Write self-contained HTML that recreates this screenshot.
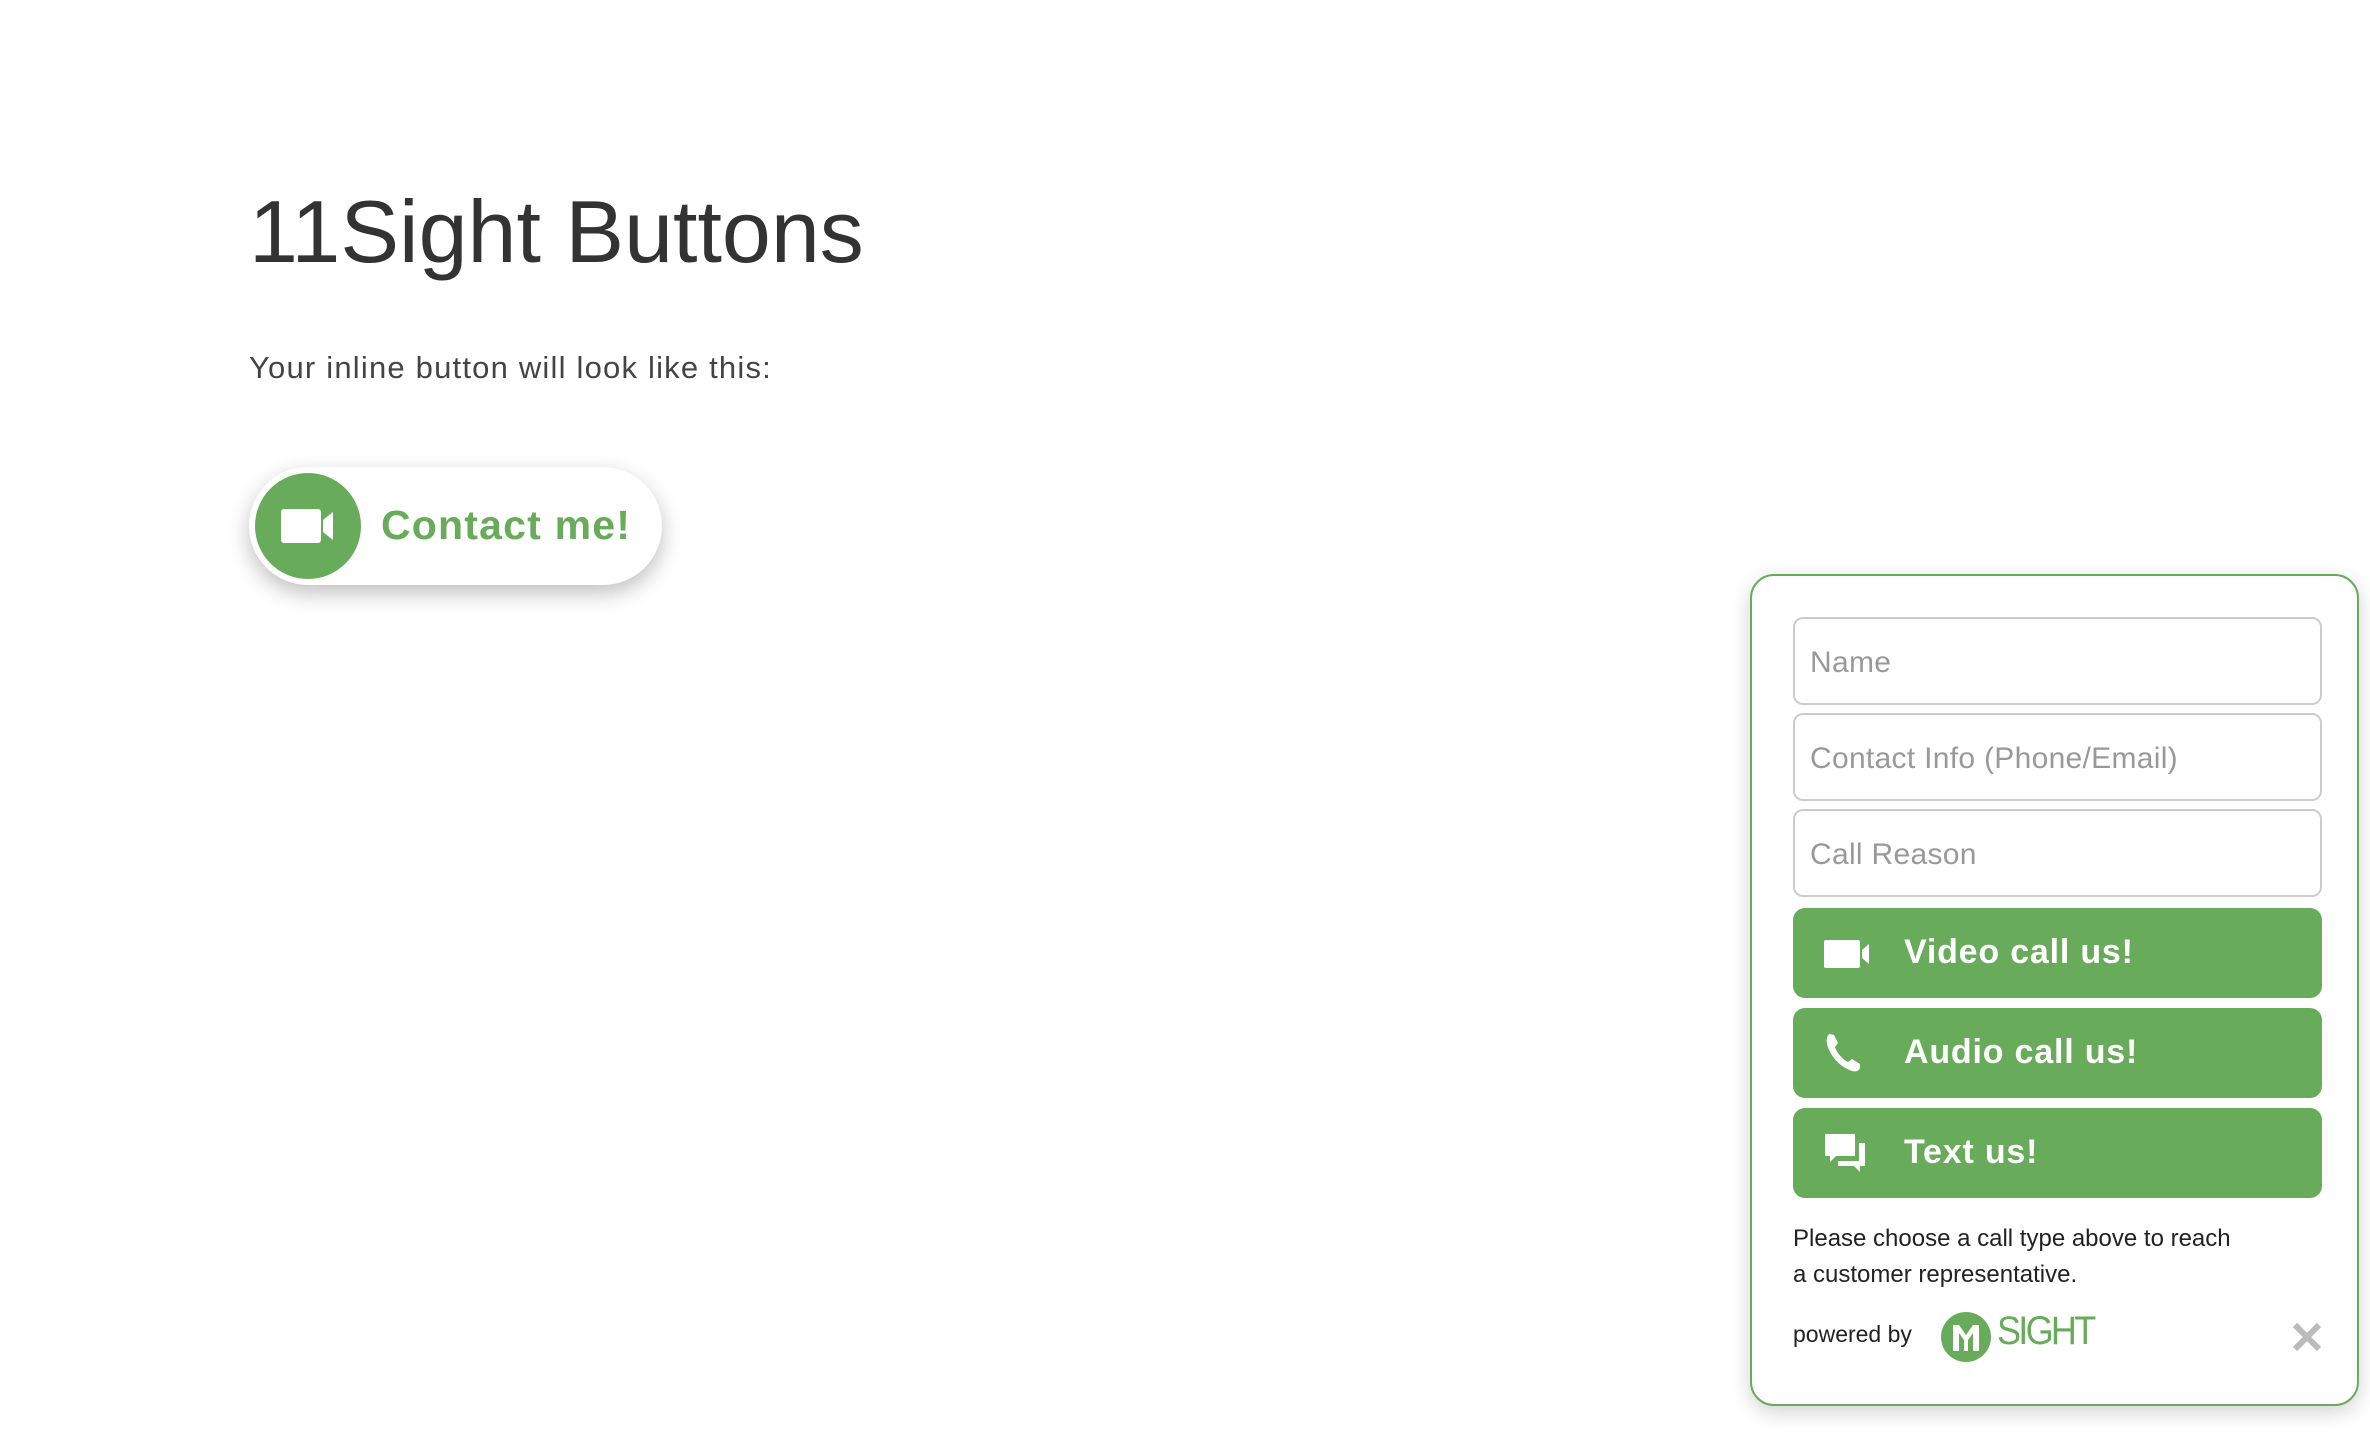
<!DOCTYPE html>
<html><head><meta charset="utf-8"><style>
*{margin:0;padding:0;box-sizing:border-box}
body{width:2370px;height:1450px;background:#fff;position:relative;overflow:hidden;font-family:"Liberation Sans",sans-serif}
.a{position:absolute}
h1{position:absolute;left:249px;top:188px;font-size:88px;font-weight:400;color:#333;letter-spacing:0;line-height:1}
.sub{left:249px;top:350px;font-size:31px;color:#444;letter-spacing:1.2px}
.pill{left:249px;top:467px;width:413px;height:118px;border-radius:59px;background:#fff;box-shadow:0 8px 22px rgba(0,0,0,.25)}
.circ{left:6px;top:6px;width:106px;height:106px;border-radius:50%;background:#68ab5a}
.ct{left:132px;top:35px;font-size:41px;font-weight:700;color:#68ab5a;letter-spacing:1.2px}
.w{left:1750px;top:574px;width:609px;height:832px;border:2px solid #68ab5a;border-radius:24px;background:#fff;box-shadow:0 6px 20px rgba(0,0,0,.18)}
.in{position:absolute;left:41px;width:529px;height:88px;border:2px solid #ccc;border-radius:10px;font-size:30px;color:#999;padding:27px 0 0 15px;letter-spacing:.3px}
.bt{position:absolute;left:41px;width:529px;height:90px;background:#68ab5a;border-radius:12px;color:#fff;font-size:34px;font-weight:700;letter-spacing:.8px}
.bt span{position:absolute;left:111px;top:25px}
.bt svg{position:absolute;left:29px;top:22px}
.p{left:41px;top:645px;font-size:24px;line-height:36px;color:#222;width:450px}
</style></head><body>
<h1>11Sight Buttons</h1>
<div class="a sub">Your inline button will look like this:</div>
<div class="a pill">
 <div class="a circ"><svg width="106" height="106" viewBox="0 0 106 106"><rect x="26" y="36" width="40" height="34" rx="3" fill="#fff"/><path d="M68 47 L78 39 V67 L68 59Z" fill="#fff"/></svg></div>
 <div class="a ct">Contact me!</div>
</div>
<div class="a w">
 <div class="in" style="top:41px">Name</div>
 <div class="in" style="top:137px">Contact Info (Phone/Email)</div>
 <div class="in" style="top:233px">Call Reason</div>
 <div class="bt" style="top:332px"><svg width="50" height="46" viewBox="0 0 50 46"><rect x="2" y="10" width="36" height="28" rx="2" fill="#fff"/><path d="M40 20 L47 14 V34 L40 28Z" fill="#fff"/></svg><span>Video call us!</span></div>
 <div class="bt" style="top:432px"><svg width="50" height="46" viewBox="0 0 50 46"><path d="M8 4 C5 5 4 9 5 14 C8 26 18 37 30 41 C34 42 37 41 38 38 L38 34 L30 29 L26 32 C20 29 15 23 13 17 L16 13 L12 5Z" fill="#fff"/></svg><span>Audio call us!</span></div>
 <div class="bt" style="top:532px"><svg width="50" height="46" viewBox="0 0 50 46"><path d="M3 4 H33 V26 H14 L8 32 V26 H3Z" fill="#fff"/><path d="M37 13 H43 V36 H38 V42 L32 36 H16 V31 H37Z" fill="#fff"/></svg><span>Text us!</span></div>
 <div class="a p">Please choose a call type above to reach<br>a customer representative.</div>
 <div class="a" style="left:41px;top:745px;font-size:23px;color:#222">powered by</div>
 <svg class="a" style="left:188px;top:735px" width="52" height="52" viewBox="0 0 52 52"><circle cx="26" cy="26" r="25" fill="#68ab5a"/><path d="M13 14 H19 L26 24 L33 14 H39 V40 H33 V22 L28 29 V40 H24 V29 L19 22 V40 H13Z" fill="#fff"/></svg>
 <div class="a" style="left:245px;top:733px;font-size:40px;color:#68ab5a;letter-spacing:-3px;transform:scaleX(.9);transform-origin:left">SIGHT</div>
 <svg class="a" style="left:540px;top:746px" width="30" height="30" viewBox="0 0 30 30"><path d="M3 3 L27 27 M27 3 L3 27" stroke="#bbb" stroke-width="6"/></svg>
</div>
</body></html>
